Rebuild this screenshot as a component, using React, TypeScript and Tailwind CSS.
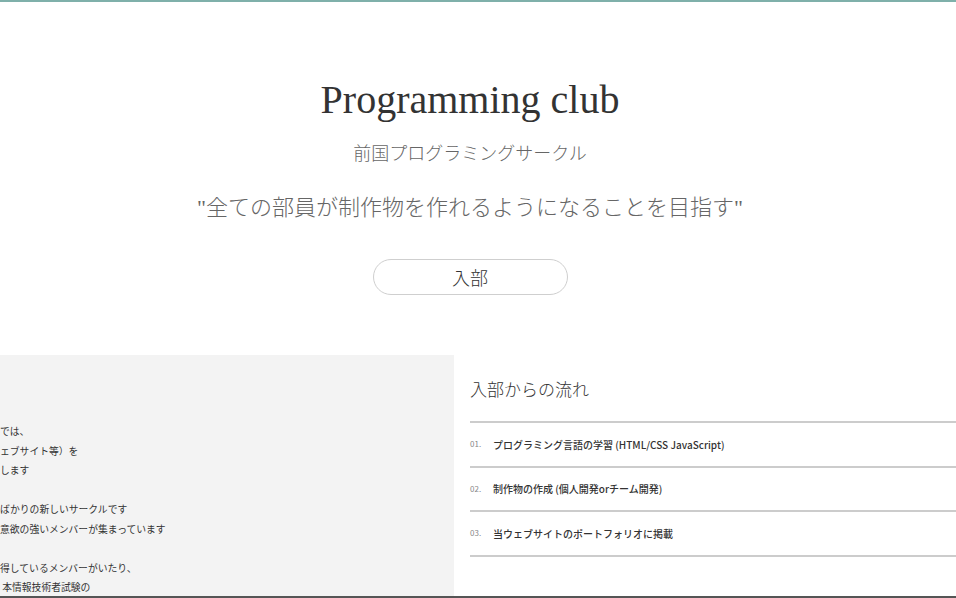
import React from "react";

const serif = { fontFamily: '"Liberation Serif", "Noto Sans CJK JP", serif' };

export default function App() {
  const leftLines = [
    "では、",
    "ェブサイト等）を",
    "します",
    "",
    "ばかりの新しいサークルです",
    "意欲の強いメンバーが集まっています",
    "",
    "得しているメンバーがいたり、",
    " 本情報技術者試験の",
  ];
  const steps = [
    ["01.", "プログラミング言語の学習 (HTML/CSS JavaScript)"],
    ["02.", "制作物の作成 (個人開発orチーム開発)"],
    ["03.", "当ウェブサイトのポートフォリオに掲載"],
  ];
  return (
    <div className="w-[956px] h-[598px] overflow-hidden bg-white flex flex-col" style={serif}>
      <div className="h-[2px] bg-[#7fb0aa] shrink-0" />
      <section className="flex flex-col items-center pr-[16px] shrink-0">
        <h1 className="mt-[78px] text-[40px] leading-[40px] text-[#333]" style={{ fontFamily: '"Liberation Serif", serif' }}>
          Programming club
        </h1>
        <p className="mt-[19px] text-[18px] leading-[26px] text-[#666] font-light" style={{ fontFamily: '"Noto Sans CJK JP", sans-serif' }}>
          前国プログラミングサークル
        </p>
        <p className="mt-[28px] text-[22px] leading-[30px] text-[#666] font-light" style={serif}>
          "全ての部員が制作物を作れるようになることを目指す"
        </p>
        <button
          className="mt-[36px] w-[195px] h-[36px] rounded-full border border-[#cfcfcf] bg-white text-[18px] text-[#333] font-light flex items-center justify-center"
          style={{ fontFamily: '"Noto Sans CJK JP", sans-serif' }}
        >
          入部
        </button>
      </section>
      <section className="mt-[60px] flex flex-1 min-h-0">
        <div className="w-[454px] bg-[#f3f3f3] pt-[67px] shrink-0">
          {leftLines.map((l, i) => (
            <p
              key={i}
              className="h-[19.5px] text-[9.8px] leading-[19.5px] text-[#333] whitespace-pre"
              style={{ fontFamily: '"Noto Sans CJK JP", sans-serif' }}
            >
              {l}
            </p>
          ))}
        </div>
        <div className="flex-1 pl-[16px] pt-[22px]">
          <h2 className="text-[17px] leading-[24px] text-[#333] font-light" style={{ fontFamily: '"Noto Sans CJK JP", sans-serif' }}>
            入部からの流れ
          </h2>
          <div className="mt-[20px] border-t-2 border-[#cccccc]">
            {steps.map(([n, t]) => (
              <div key={n} className="h-[44.5px] border-b-2 border-[#cccccc] flex items-center" style={{ fontFamily: '"Noto Sans CJK JP", sans-serif' }}>
                <span className="w-[23px] text-[8px] text-[#888]">{n}</span>
                <span className="text-[10px] text-[#333] font-medium">{t}</span>
              </div>
            ))}
          </div>
        </div>
      </section>
      <div className="h-[2px] bg-[#555] shrink-0" />
    </div>
  );
}
